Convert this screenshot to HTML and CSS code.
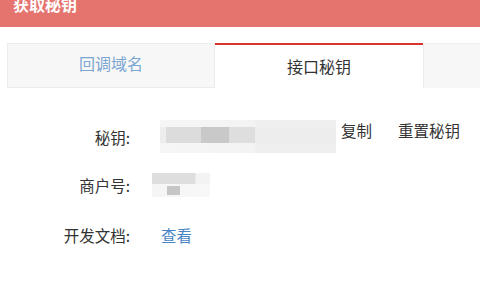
FILE: index.html
```html
<!DOCTYPE html>
<html lang="zh-CN">
<head>
    <meta charset="UTF-8">
    <title>获取秘钥</title>
    <link rel="stylesheet" href="styles.css">
</head>
<body>
    <div class="header">
        <h1>获取秘钥</h1>
    </div>

    <div class="tabs">
        <div class="tab">回调域名</div>
        <div class="tab active">接口秘钥</div>
        <div class="tab-rest"></div>
    </div>

    <div class="info">
        <div class="row row-key">
            <span class="label">秘钥:</span>
            <div class="key-box">
                <div class="blur-line light"></div>
                <div class="blur-line mid">
                    <span class="b1"></span><span class="b2"></span><span class="b3"></span>
                </div>
                <div class="blur-line light"></div>
            </div>
            <a class="action copy">复制</a>
            <a class="action">重置秘钥</a>
        </div>
        <div class="row row-merchant">
            <span class="label">商户号:</span>
            <div class="merchant-blur">
                <div class="m-top"></div>
                <div class="m-bottom"><span></span></div>
            </div>
        </div>
        <div class="row row-doc">
            <span class="label">开发文档:</span>
            <a class="link">查看</a>
        </div>
    </div>
</body>
</html>
```

FILE: styles.css
```css
body {
    margin: 0;
    font-family: "Noto Sans CJK SC", "Noto Sans", sans-serif;
    background: #fff;
    color: #333;
    overflow: hidden;
}

.header {
    height: 27px;
    background: #e5746f;
    overflow: hidden;
    padding-left: 13px;
}

.header h1 {
    margin: -4px 0 0;
    font-size: 16px;
    line-height: 16px;
    font-weight: bold;
    color: #fff;
}

/* tabs */
.tabs {
    display: flex;
    margin-top: 16px;
    padding-left: 7px;
    height: 45px;
}

.tab {
    width: 208px;
    box-sizing: border-box;
    display: flex;
    align-items: center;
    justify-content: center;
    font-size: 16px;
    color: #7ba6d2;
    background: #f7f7f7;
    border: 1px solid #ececec;
    padding-bottom: 5px;
}

.tab.active {
    background: #fff;
    color: #333;
    border: none;
    border-top: 2px solid #d7342f;
    padding-bottom: 2px;
}

.tab-rest {
    flex: 1;
    background: #f7f7f7;
    border-left: 1px solid #ececec;
    border-top: 1px solid #f0f0f0;
}

/* info rows */
.info {
    padding-top: 32px;
}

.row {
    display: flex;
    align-items: center;
    font-size: 15.5px;
}

.label {
    width: 130px;
    text-align: right;
    color: #333;
}

.row-key {
    height: 33px;
}

.key-box {
    margin-left: 30px;
    width: 176px;
    height: 33px;
    background: #eeeeee;
    display: flex;
    flex-direction: column;
}

.blur-line.light {
    height: 7px;
    background: linear-gradient(90deg, #f6f6f6 0, #f3f3f3 95px, #efefef 96px);
}

.blur-line.light:last-child {
    height: 10px;
}

.blur-line.mid {
    height: 16px;
    display: flex;
    background: #ededed;
}

.blur-line.mid span {
    height: 100%;
}

.b1 { width: 35px; margin-left: 6px; background: #dcdcdc; }
.b2 { width: 28px; background: #c9c9c9; }
.b3 { width: 26px; background: #dedede; }

.action {
    align-self: flex-start;
    line-height: 20px;
    margin-left: 5px;
    color: #333;
    cursor: pointer;
}

.action.copy + .action {
    margin-left: 26px;
}

.row-merchant {
    height: 30px;
    margin-top: 17px;
}

.merchant-blur {
    margin-left: 22px;
    width: 58px;
    height: 24px;
    display: flex;
    flex-direction: column;
}

.m-top {
    height: 11px;
    background: linear-gradient(90deg, #dedede 0, #dedede 43px, #f3f3f3 44px);
}

.m-bottom {
    height: 13px;
    background: linear-gradient(90deg, #f5f5f5 0, #f8f8f8 100%);
    display: flex;
    align-items: center;
}

.m-bottom span {
    width: 13px;
    height: 9px;
    margin-left: 15px;
    background: #c6c6c6;
}

.row-doc {
    height: 30px;
    margin-top: 20px;
}

.link {
    margin-left: 31px;
    color: #4a85c4;
    cursor: pointer;
}
```
